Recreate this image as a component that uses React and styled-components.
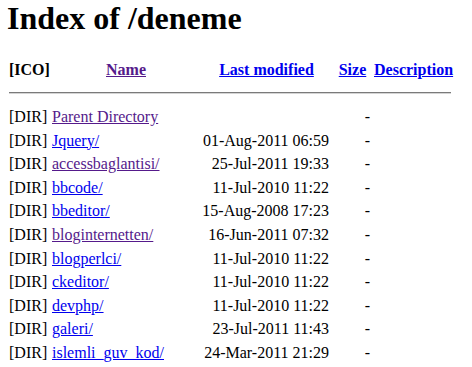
import React from "react";
import styled, { createGlobalStyle } from "styled-components";

const entries = [
  { name: "Parent Directory", date: "", visited: true },
  { name: "Jquery/", date: "01-Aug-2011 06:59" },
  { name: "accessbaglantisi/", date: "25-Jul-2011 19:33", visited: true },
  { name: "bbcode/", date: "11-Jul-2010 11:22" },
  { name: "bbeditor/", date: "15-Aug-2008 17:23" },
  { name: "bloginternetten/", date: "16-Jun-2011 07:32", visited: true },
  { name: "blogperlci/", date: "11-Jul-2010 11:22" },
  { name: "ckeditor/", date: "11-Jul-2010 11:22" },
  { name: "devphp/", date: "11-Jul-2010 11:22" },
  { name: "galeri/", date: "23-Jul-2011 11:43" },
  { name: "islemli_guv_kod/", date: "24-Mar-2011 21:29" },
];

const App = () => {
  return (
    <Page>
      <GlobalStyle />
      <Title>Index of /deneme</Title>
      <Listing>
        <colgroup>
          <col style={{ width: 43 }} />
          <col style={{ width: 150 }} />
          <col style={{ width: 129 }} />
          <col style={{ width: 41 }} />
          <col style={{ width: 79 }} />
        </colgroup>
        <thead>
          <tr>
            <HeadCell $align="left">[ICO]</HeadCell>
            <HeadCell $padRight={2}>
              <Link href="#" $visited>Name</Link>
            </HeadCell>
            <HeadCell>
              <Link href="#">Last modified</Link>
            </HeadCell>
            <HeadCell $padLeft={4} $padRight={2}>
              <Link href="#">Size</Link>
            </HeadCell>
            <HeadCell $align="left" $padLeft={2}>
              <Link href="#">Description</Link>
            </HeadCell>
          </tr>
          <tr>
            <RuleCell colSpan={5}>
              <Rule />
            </RuleCell>
          </tr>
        </thead>
        <tbody>
          {entries.map((entry) => (
            <tr key={entry.name}>
              <Cell>[DIR]</Cell>
              <Cell>
                <Link href="#" $visited={entry.visited}>{entry.name}</Link>
              </Cell>
              <Cell $align="right" $padRight={2}>{entry.date}</Cell>
              <Cell $align="right" $padRight={2}>-</Cell>
              <Cell>&nbsp;</Cell>
            </tr>
          ))}
        </tbody>
      </Listing>
    </Page>
  );
};

const GlobalStyle = createGlobalStyle`
  html, body {
    margin: 0;
    padding: 0;
    background: #ffffff;
    overflow: hidden;
  }
`;

const Page = styled.div`
  padding: 0 8px;
  font-family: "Liberation Serif", "Times New Roman", serif;
  font-size: 16px;
  color: #000000;
`;

const Title = styled.h1`
  margin: 0 0 0 -1px;
  font-size: 32px;
  font-weight: bold;
  line-height: 36px;
`;

const Listing = styled.table`
  margin: 22px 0 0 1px;
  width: 442px;
  table-layout: fixed;
  border-collapse: collapse;
  border-spacing: 0;
`;

const HeadCell = styled.th`
  height: 23.6px;
  padding: 0 ${(p) => p.$padRight || 0}px 0 ${(p) => p.$padLeft || 0}px;
  text-align: ${(p) => p.$align || "center"};
  font-weight: bold;
  white-space: nowrap;
  vertical-align: middle;
`;

const Cell = styled.td`
  height: 23.6px;
  padding: 0 ${(p) => p.$padRight || 0}px 0 0;
  text-align: ${(p) => p.$align || "left"};
  white-space: nowrap;
  vertical-align: middle;
`;

const RuleCell = styled.th`
  height: 23.6px;
  padding: 0;
  vertical-align: middle;
`;

const Rule = styled.hr`
  margin: 0;
  height: 0;
  border: none;
  border-top: 1px solid #7a7a7a;
  border-bottom: 1px solid #d4d4d4;
`;

const Link = styled.a`
  color: ${(p) => (p.$visited ? "#551a8b" : "#0000ee")};
  text-decoration: underline;
`;

export default App;
